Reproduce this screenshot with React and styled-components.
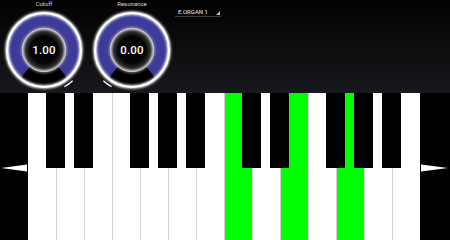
import React, { useId } from "react";
import styled, { createGlobalStyle } from "styled-components";

const GlobalStyle = createGlobalStyle`
  html, body {
    margin: 0;
    padding: 0;
    background: #000;
  }
  body {
    font-family: Roboto, "Noto Sans", sans-serif;
  }
`;

const WHITE_W = 28;
// note names for the 14 white keys, C to B twice
const WHITE_KEYS = ["C", "D", "E", "F", "G", "A", "B", "C", "D", "E", "F", "G", "A", "B"];
// white key boundaries that carry a black key
const BLACK_AT = [1, 2, 4, 5, 6, 8, 9, 11, 12, 13];
// pressed keys (C major chord in 2nd octave)
const ACTIVE = [7, 9, 11];

const KNOBS = [
  { label: "Cutoff", value: 1 },
  { label: "Resonance", value: 0 },
];

//knob geometry
const C = 44;
const GAP = 40;
const pt = (deg, r) => {
  const a = (deg * Math.PI) / 180;
  return [C + r * Math.sin(a), C - r * Math.cos(a)];
};
const bandPath = (from, to, r1, r2) => {
  const [ax, ay] = pt(from, r2);
  const [bx, by] = pt(to, r2);
  const [cx, cy] = pt(to, r1);
  const [dx, dy] = pt(from, r1);
  const large = (to - from + 360) % 360 > 180 ? 1 : 0;
  return `M${ax} ${ay} A${r2} ${r2} 0 ${large} 1 ${bx} ${by} L${cx} ${cy} A${r1} ${r1} 0 ${large} 0 ${dx} ${dy} Z`;
};
const arcPath = (from, to, r) => {
  const [ax, ay] = pt(from, r);
  const [bx, by] = pt(to, r);
  return `M${ax} ${ay} A${r} ${r} 0 0 1 ${bx} ${by}`;
};

const App = () => {
  return (
    <>
      <GlobalStyle />
      <Screen>
        <Header>
          {KNOBS.map((k) => (
            <Knob key={k.label} label={k.label} value={k.value} />
          ))}
          <Dropdown>
            <span>E.ORGAN 1</span>
            <Corner />
          </Dropdown>
        </Header>
        <KeyboardRow>
          <SidePanel>
            <svg width="28" height="8" viewBox="0 0 28 8">
              <polygon points="1,4 27,0.5 27,7.5" fill="#fff" />
            </svg>
          </SidePanel>
          <Keys>
            {WHITE_KEYS.map((n, i) => (
              <WhiteKey key={i} title={n} $active={ACTIVE.includes(i)} />
            ))}
            {BLACK_AT.map((b) => (
              <BlackKey key={b} style={{ left: b * WHITE_W - 10 }} />
            ))}
          </Keys>
          <SidePanel $right>
            <svg width="30" height="8" viewBox="0 0 30 8">
              <polygon points="28,4 1,0.5 1,7.5" fill="#fff" />
            </svg>
          </SidePanel>
        </KeyboardRow>
      </Screen>
    </>
  );
};

const Knob = ({ label, value }) => {
  const id = useId().replace(/:/g, "");
  const tick = 216 + value * 288;
  return (
    <KnobBox>
      <KnobLabel>{label}</KnobLabel>
      <KnobFace>
        <svg width="88" height="88" viewBox="0 0 88 88" overflow="visible">
          <defs>
            <filter id={`glow${id}`} x="-30%" y="-30%" width="160%" height="160%">
              <feGaussianBlur stdDeviation="1.6" result="b" />
              <feMerge>
                <feMergeNode in="b" />
                <feMergeNode in="b" />
                <feMergeNode in="SourceGraphic" />
              </feMerge>
            </filter>
            <radialGradient id={`inner${id}`} cx="50%" cy="50%" r="50%">
              <stop offset="0%" stopColor="#000" />
              <stop offset="62%" stopColor="#050505" />
              <stop offset="86%" stopColor="#343434" />
              <stop offset="100%" stopColor="#bdbdbd" />
            </radialGradient>
          </defs>
          <circle cx={C} cy={C} r="37" fill="#000" />
          <path d={bandPath(180 + GAP, 180 - GAP, 21, 36.5)} fill="#3d3b99" />
          <circle
            cx={C}
            cy={C}
            r="37"
            fill="none"
            stroke="#fff"
            strokeWidth="2.1"
            filter={`url(#glow${id})`}
          />
          <circle cx={C} cy={C} r="22" fill={`url(#inner${id})`} />
          <circle
            cx={C}
            cy={C}
            r="21.6"
            fill="none"
            stroke="#c8c8c8"
            strokeWidth="1"
            filter={`url(#glow${id})`}
          />
          <path
            d={arcPath(tick - 7, tick + 7, 42)}
            fill="none"
            stroke="#fff"
            strokeWidth="1.3"
          />
        </svg>
        <KnobValue>{value.toFixed(2)}</KnobValue>
      </KnobFace>
    </KnobBox>
  );
};

export default App;

//style Component
const Screen = styled.div`
  width: 450px;
  height: 240px;
  overflow: hidden;
  background: #000;
  display: flex;
  flex-direction: column;
`;

const Header = styled.div`
  height: 93px;
  flex-shrink: 0;
  display: flex;
  align-items: flex-start;
  background: linear-gradient(180deg, #020203 0%, #0c0c0e 45%, #17181c 100%);
`;

const KnobBox = styled.div`
  width: 88px;
  display: flex;
  flex-direction: column;
  align-items: center;
`;

const KnobLabel = styled.div`
  height: 6px;
  font-size: 6px;
  line-height: 7px;
  color: #d6d6d6;
`;

const KnobFace = styled.div`
  display: grid;
  width: 88px;
  height: 88px;

  & > * {
    grid-area: 1 / 1;
  }
`;

const KnobValue = styled.div`
  place-self: center;
  color: #fff;
  font-size: 11.5px;
  font-weight: 500;
  letter-spacing: 0.2px;
`;

const Dropdown = styled.div`
  margin: 8px 0 0 -1px;
  width: 46px;
  height: 9px;
  box-sizing: border-box;
  padding: 0 1px 1px 3px;
  display: flex;
  align-items: flex-end;
  justify-content: space-between;
  border-bottom: 1px solid #3b3b3e;
  font-size: 6px;
  line-height: 7px;
  color: #e8e8e8;
`;

const Corner = styled.div`
  width: 0;
  height: 0;
  border-left: 4px solid transparent;
  border-bottom: 4px solid #bdbdbd;
`;

const KeyboardRow = styled.div`
  flex: 1;
  display: flex;
  background: #000;
`;

const SidePanel = styled.div`
  width: ${({ $right }) => ($right ? "30px" : "28px")};
  flex-shrink: 0;
  padding-top: 71px;
  line-height: 0;

  svg {
    display: block;
  }
`;

const Keys = styled.div`
  position: relative;
  width: ${WHITE_W * 14}px;
  display: flex;
`;

const WhiteKey = styled.div`
  width: ${WHITE_W}px;
  flex-shrink: 0;
  box-sizing: border-box;
  background: ${({ $active }) => ($active ? "#00ff00" : "#fff")};
  border-left: 1px solid #d0d0d0;

  &:first-child {
    border-left: none;
  }
`;

const BlackKey = styled.div`
  position: absolute;
  top: 0;
  width: 19px;
  height: 75px;
  background: #000;
`;
